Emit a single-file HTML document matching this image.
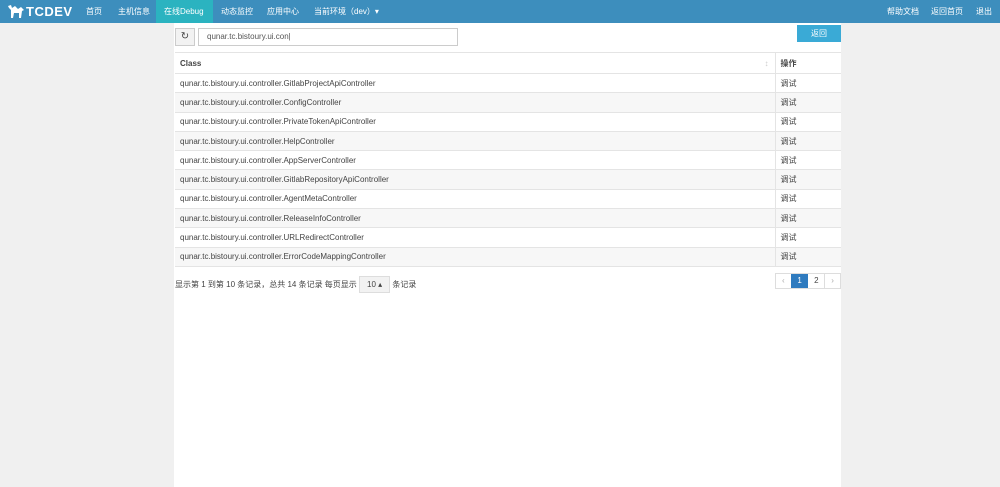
<!DOCTYPE html><html><head><meta charset="utf-8"><style>
*{margin:0;padding:0;box-sizing:border-box}
body{width:1000px;height:487px;background:#f0f0f0;font-family:"Liberation Sans","Noto Sans CJK SC",sans-serif;font-size:8px;color:#444;position:relative;overflow:hidden}
.nav{position:absolute;left:0;top:0;width:1000px;height:23px;background:#3d8ebd;color:#fff}
.nav span{position:absolute;top:0;line-height:23px;font-size:8px}
.logo{left:26px;font-weight:bold;font-size:13px!important;letter-spacing:.5px}
.act{background:#2bb3c0;}
.panel{position:absolute;left:174px;top:23px;width:667px;height:464px;background:#fff}
.abs{position:absolute}
table{position:absolute;left:175px;top:52px;width:666px;border-collapse:collapse}
td{height:19.3px;padding-left:5px;border-top:1px solid #e4e4e4;font-size:8px;color:#444}
tr:nth-child(odd) td{background:#f7f7f7}
td.o{width:66px;border-left:1px solid #e4e4e4}
th{height:21px;text-align:left;padding-left:5px;font-size:8px;background:#fff;border-top:1px solid #e4e4e4}
</style></head><body>
<div class="nav">
<svg class="abs" style="left:7px;top:4px" width="18" height="15" viewBox="0 0 18 15"><path d="M1 2 L4 1 L5 4 L8 2 L11 5 L14 3 L17 6 L15 7 L14 14 L12 14 L12 9 L7 9 L6 14 L4 14 L4 6 L2 4 Z" fill="#fff"/></svg>
<span class="logo">TCDEV</span>
<span style="left:86px">首页</span>
<span style="left:118px">主机信息</span>
<span class="act" style="left:156px;width:57px;padding-left:8px">在线Debug</span>
<span style="left:221px">动态监控</span>
<span style="left:267px">应用中心</span>
<span style="left:314px">当前环境（dev）▾</span>
<span style="left:887px">帮助文档</span>
<span style="left:931px">返回首页</span>
<span style="left:976px">退出</span>
</div>
<div class="panel"></div>
<div class="abs" style="left:175px;top:28px;width:20px;height:18px;background:#f2f2f2;border:1px solid #ccc;text-align:center;line-height:16px;font-size:10px">↻</div>
<div class="abs" style="left:198px;top:28px;width:260px;height:18px;border:1px solid #ccc;padding-left:8px;line-height:16px;color:#555">qunar.tc.bistoury.ui.con|</div>
<div class="abs" style="left:797px;top:25px;width:44px;height:17px;background:#3aaad6;color:#fff;text-align:center;line-height:17px">返回</div>
<table>
<tr><th>Class<span style="float:right;color:#ccc;padding-right:6px">↕</span></th><th style="border-left:1px solid #e4e4e4">操作</th></tr>
<tr><td>qunar.tc.bistoury.ui.controller.GitlabProjectApiController</td><td class="o">调试</td></tr>
<tr><td>qunar.tc.bistoury.ui.controller.ConfigController</td><td class="o">调试</td></tr>
<tr><td>qunar.tc.bistoury.ui.controller.PrivateTokenApiController</td><td class="o">调试</td></tr>
<tr><td>qunar.tc.bistoury.ui.controller.HelpController</td><td class="o">调试</td></tr>
<tr><td>qunar.tc.bistoury.ui.controller.AppServerController</td><td class="o">调试</td></tr>
<tr><td>qunar.tc.bistoury.ui.controller.GitlabRepositoryApiController</td><td class="o">调试</td></tr>
<tr><td>qunar.tc.bistoury.ui.controller.AgentMetaController</td><td class="o">调试</td></tr>
<tr><td>qunar.tc.bistoury.ui.controller.ReleaseInfoController</td><td class="o">调试</td></tr>
<tr><td>qunar.tc.bistoury.ui.controller.URLRedirectController</td><td class="o">调试</td></tr>
<tr><td style="border-bottom:1px solid #e4e4e4">qunar.tc.bistoury.ui.controller.ErrorCodeMappingController</td><td class="o" style="border-bottom:1px solid #e4e4e4">调试</td></tr>
</table>
<div class="abs" style="left:175px;top:276px;line-height:11px">显示第 1 到第 10 条记录，总共 14 条记录 每页显示 <span style="display:inline-block;background:#f2f2f2;border:1px solid #ddd;padding:2px 7px">10 ▴</span> 条记录</div>
<div class="abs" style="left:775px;top:273px;width:66px;height:16px;border:1px solid #ddd;display:flex;font-size:8px;line-height:14px">
<span style="width:15px;text-align:center;color:#aaa">‹</span><span style="width:18px;background:#2f7bbf;color:#fff;text-align:center">1</span><span style="width:17px;text-align:center;border-right:1px solid #ddd">2</span><span style="width:15px;text-align:center;color:#aaa">›</span></div>
</body></html>
